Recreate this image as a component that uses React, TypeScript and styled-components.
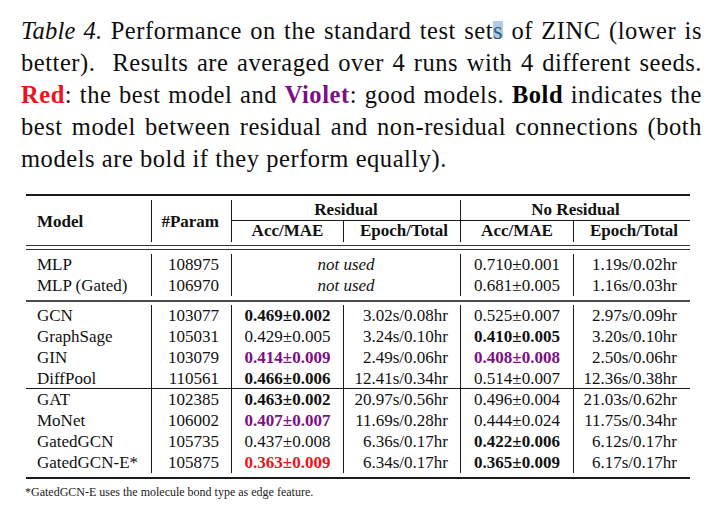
import React from "react";
import styled, { createGlobalStyle, css } from "styled-components";

const GlobalStyle = createGlobalStyle`
  html, body { margin: 0; padding: 0; background: #ffffff; }
  body { font-family: "Liberation Serif", "Times New Roman", serif; color: #000; }
  * { box-sizing: border-box; }
`;

const COLS = "125px 80px 112px 117px 113px 117px";
const RULE = "#1a1a1a";

const Page = styled.div`
  display: flex;
  flex-direction: column;
  width: 719px;
  min-height: 528px;
  background: #fff;
`;

const Caption = styled.div`
  margin: 15px 0 0 21px;
  width: 681px;
  font-size: 24.5px;
  letter-spacing: 0.55px;
  line-height: 32px;
  color: #0d0d0d;
`;

const CaptionLine = styled.div<{ $last?: boolean }>`
  white-space: nowrap;
  text-align: justify;
  text-align-last: ${(p) => (p.$last ? "left" : "justify")};
`;

const TableLabel = styled.i`
  font-style: italic;
  letter-spacing: 0.2px;
`;

const Hl = styled.span`
  color: #2e5f8c;
  background: linear-gradient(#b3cbe2, #b3cbe2) no-repeat;
  background-size: 100% 17px;
  background-position: 0 4px;
`;

const Strong = styled.b<{ $tone?: "red" | "violet" }>`
  font-weight: 700;
  color: ${(p) => (p.$tone === "red" ? "#f2111a" : p.$tone === "violet" ? "#7d0f82" : "#000")};
`;

const Table = styled.div`
  margin: 19px 0 0 26px;
  width: 664px;
  display: flex;
  flex-direction: column;
  font-size: 17px;
  color: #111;
`;

const Rule = styled.div<{ $weight: number; $gap: number; $color?: string }>`
  margin-top: ${(p) => p.$gap}px;
  height: ${(p) => p.$weight}px;
  background: ${(p) => p.$color ?? RULE};
`;

const DoubleRule = styled.div`
  margin-top: 3px;
  height: 5px;
  border-top: 1px solid #333;
  border-bottom: 1px solid #333;
`;

const HeaderGrid = styled.div`
  margin-top: 4px;
  display: grid;
  grid-template-columns: ${COLS};
  grid-template-rows: 21px 21px;
  font-weight: 700;
  line-height: 19px;
`;

const HeadCell = styled.div<{
  $col: string;
  $row: string;
  $divider?: boolean;
  $under?: boolean;
  $align?: "left" | "center" | "right";
  $valign?: "center" | "start" | "end";
  $pl?: number;
  $pr?: number;
}>`
  grid-column: ${(p) => p.$col};
  grid-row: ${(p) => p.$row};
  display: flex;
  align-items: ${(p) => (p.$valign === "end" ? "flex-end" : p.$valign === "start" ? "flex-start" : "center")};
  justify-content: ${(p) => (p.$align === "left" ? "flex-start" : p.$align === "right" ? "flex-end" : "center")};
  padding-left: ${(p) => p.$pl ?? 0}px;
  padding-right: ${(p) => p.$pr ?? 0}px;
  ${(p) => p.$divider && css`border-left: 1px solid ${RULE};`}
  ${(p) =>
    p.$under &&
    css`
      border-bottom: 1px solid ${RULE};
      padding-bottom: 1px;
    `}
`;

const Section = styled.div<{ $gap: number }>`
  margin-top: ${(p) => p.$gap}px;
  display: flex;
  flex-direction: column;
`;

const Row = styled.div<{ $ruleBelow?: boolean }>`
  display: grid;
  grid-template-columns: ${COLS};
  height: 21px;
  line-height: 21px;
  ${(p) => p.$ruleBelow && css`box-shadow: inset 0 -1px 0 ${RULE};`}
`;

type Tone = "plain" | "bold" | "violet" | "red";

const Cell = styled.div<{
  $align: "left" | "center" | "right";
  $divider?: boolean;
  $span?: number;
  $tone?: Tone;
  $italic?: boolean;
  $pl?: number;
  $pr?: number;
}>`
  white-space: nowrap;
  text-align: ${(p) => p.$align};
  padding-left: ${(p) => p.$pl ?? 0}px;
  padding-right: ${(p) => p.$pr ?? 0}px;
  ${(p) => p.$span && css`grid-column: span ${p.$span};`}
  ${(p) => p.$divider && css`border-left: 1px solid ${RULE};`}
  font-style: ${(p) => (p.$italic ? "italic" : "normal")};
  font-weight: ${(p) => (p.$tone && p.$tone !== "plain" ? 700 : 400)};
  color: ${(p) => (p.$tone === "red" ? "#f2111a" : p.$tone === "violet" ? "#7d0f82" : "#111")};
`;

const Footnote = styled.div`
  margin: 6px 0 0 25px;
  font-size: 12px;
  line-height: 14px;
  color: #222;
`;

type Result = { acc: string; tone: Tone; time: string };
type Entry = { model: string; param: string; res?: Result; nores: Result; ruleBelow?: boolean };

const r = (acc: string, tone: Tone, time: string): Result => ({ acc, tone, time });

const mlpRows: Entry[] = [
  { model: "MLP", param: "108975", nores: r("0.710±0.001", "plain", "1.19s/0.02hr") },
  { model: "MLP (Gated)", param: "106970", nores: r("0.681±0.005", "plain", "1.16s/0.03hr") },
];

const gnnRows: Entry[] = [
  { model: "GCN", param: "103077", res: r("0.469±0.002", "bold", "3.02s/0.08hr"), nores: r("0.525±0.007", "plain", "2.97s/0.09hr") },
  { model: "GraphSage", param: "105031", res: r("0.429±0.005", "plain", "3.24s/0.10hr"), nores: r("0.410±0.005", "bold", "3.20s/0.10hr") },
  { model: "GIN", param: "103079", res: r("0.414±0.009", "violet", "2.49s/0.06hr"), nores: r("0.408±0.008", "violet", "2.50s/0.06hr") },
  { model: "DiffPool", param: "110561", res: r("0.466±0.006", "bold", "12.41s/0.34hr"), nores: r("0.514±0.007", "plain", "12.36s/0.38hr"), ruleBelow: true },
  { model: "GAT", param: "102385", res: r("0.463±0.002", "bold", "20.97s/0.56hr"), nores: r("0.496±0.004", "plain", "21.03s/0.62hr") },
  { model: "MoNet", param: "106002", res: r("0.407±0.007", "violet", "11.69s/0.28hr"), nores: r("0.444±0.024", "plain", "11.75s/0.34hr") },
  { model: "GatedGCN", param: "105735", res: r("0.437±0.008", "plain", "6.36s/0.17hr"), nores: r("0.422±0.006", "bold", "6.12s/0.17hr") },
  { model: "GatedGCN-E*", param: "105875", res: r("0.363±0.009", "red", "6.34s/0.17hr"), nores: r("0.365±0.009", "bold", "6.17s/0.17hr") },
];

const DataRow: React.FC<{ e: Entry }> = ({ e }) => (
  <Row $ruleBelow={e.ruleBelow}>
    <Cell $align="left" $pl={11}>{e.model}</Cell>
    <Cell $align="right" $divider $pr={12}>{e.param}</Cell>
    {e.res ? (
      <>
        <Cell $align="center" $divider $tone={e.res.tone}>{e.res.acc}</Cell>
        <Cell $align="right" $divider $pr={12}>{e.res.time}</Cell>
      </>
    ) : (
      <Cell $align="center" $divider $span={2} $italic>not used</Cell>
    )}
    <Cell $align="center" $divider $tone={e.nores.tone}>{e.nores.acc}</Cell>
    <Cell $align="right" $divider $pr={13}>{e.nores.time}</Cell>
  </Row>
);

export default function App() {
  return (
    <Page>
      <GlobalStyle />
      <Caption>
        <CaptionLine>
          <TableLabel>Table 4.</TableLabel> Performance on the standard test set<Hl>s</Hl> of ZINC (lower is
        </CaptionLine>
        <CaptionLine>better).&nbsp; Results are averaged over 4 runs with 4 different seeds.</CaptionLine>
        <CaptionLine>
          <Strong $tone="red">Red</Strong>: the best model and <Strong $tone="violet">Violet</Strong>: good models.{" "}
          <Strong>Bold</Strong> indicates the
        </CaptionLine>
        <CaptionLine>best model between residual and non-residual connections (both</CaptionLine>
        <CaptionLine $last>models are bold if they perform equally).</CaptionLine>
      </Caption>

      <Table>
        <Rule $weight={2} $gap={0} />
        <HeaderGrid>
          <HeadCell $col="1" $row="1 / span 2" $align="left" $pl={11}>Model</HeadCell>
          <HeadCell $col="2" $row="1 / span 2" $align="right" $pr={12} $divider>#Param</HeadCell>
          <HeadCell $col="3 / span 2" $row="1" $divider $under $valign="end">Residual</HeadCell>
          <HeadCell $col="5 / span 2" $row="1" $divider $under $valign="end">No Residual</HeadCell>
          <HeadCell $col="3" $row="2" $divider $valign="start">Acc/MAE</HeadCell>
          <HeadCell $col="4" $row="2" $divider $valign="start" $pl={4}>Epoch/Total</HeadCell>
          <HeadCell $col="5" $row="2" $divider $valign="start">Acc/MAE</HeadCell>
          <HeadCell $col="6" $row="2" $divider $valign="start" $pl={4}>Epoch/Total</HeadCell>
        </HeaderGrid>
        <DoubleRule />
        <Section $gap={4}>
          {mlpRows.map((e) => (
            <DataRow key={e.model} e={e} />
          ))}
        </Section>
        <Rule $weight={2} $gap={4} $color="#4a4a4a" />
        <Section $gap={3}>
          {gnnRows.map((e) => (
            <DataRow key={e.model} e={e} />
          ))}
        </Section>
        <Rule $weight={2} $gap={4} />
      </Table>

      <Footnote>*GatedGCN-E uses the molecule bond type as edge feature.</Footnote>
    </Page>
  );
}
